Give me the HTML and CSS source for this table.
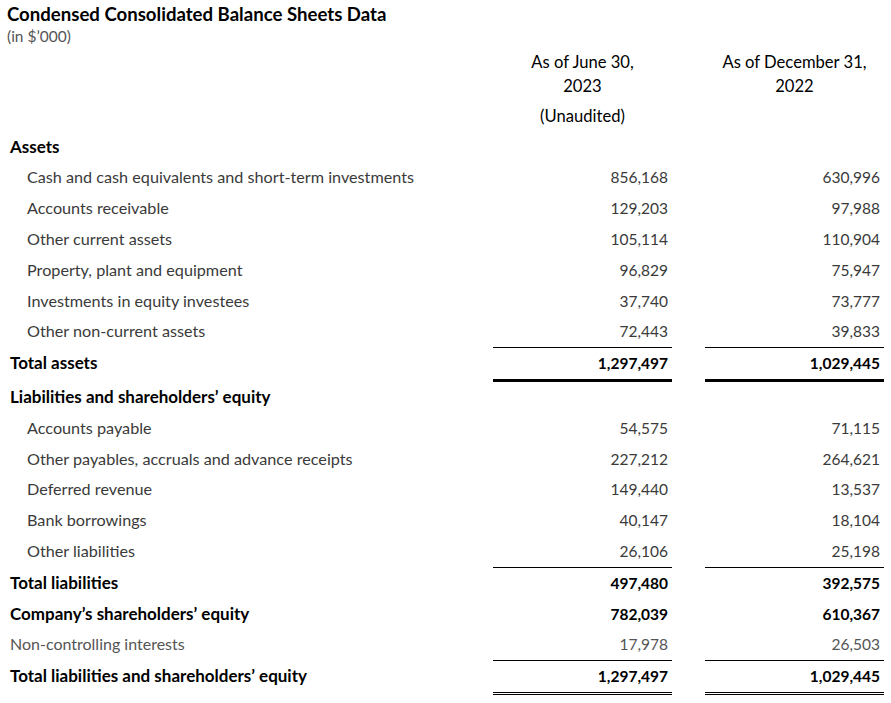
FILE: index.html
```html
<!DOCTYPE html>
<html lang="en">
<head>
<meta charset="utf-8">
<title>Condensed Consolidated Balance Sheets Data</title>
<link rel="stylesheet" href="styles.css">
</head>
<body>
<div class="page">
  <h1 class="title">Condensed Consolidated Balance Sheets Data</h1>
  <div class="unit">(in $’000)</div>

  <div class="sheet">
    <div class="row head">
      <div class="label"></div>
      <div class="colhead"><div>As of June 30,</div><div>2023</div><div class="note">(Unaudited)</div></div>
      <div class="colhead"><div>As of December 31,</div><div>2022</div></div>
    </div>

    <div class="row strong"><div class="label">Assets</div><div class="num"></div><div class="num"></div></div>
    <div class="row sub"><div class="label">Cash and cash equivalents and short-term investments</div><div class="num">856,168</div><div class="num">630,996</div></div>
    <div class="row sub"><div class="label">Accounts receivable</div><div class="num">129,203</div><div class="num">97,988</div></div>
    <div class="row sub"><div class="label">Other current assets</div><div class="num">105,114</div><div class="num">110,904</div></div>
    <div class="row sub"><div class="label">Property, plant and equipment</div><div class="num">96,829</div><div class="num">75,947</div></div>
    <div class="row sub"><div class="label">Investments in equity investees</div><div class="num">37,740</div><div class="num">73,777</div></div>
    <div class="row sub rule"><div class="label">Other non-current assets</div><div class="num">72,443</div><div class="num">39,833</div></div>
    <div class="row strong thick"><div class="label">Total assets</div><div class="num">1,297,497</div><div class="num">1,029,445</div></div>

    <div class="row strong"><div class="label">Liabilities and shareholders’ equity</div><div class="num"></div><div class="num"></div></div>
    <div class="row sub"><div class="label">Accounts payable</div><div class="num">54,575</div><div class="num">71,115</div></div>
    <div class="row sub"><div class="label">Other payables, accruals and advance receipts</div><div class="num">227,212</div><div class="num">264,621</div></div>
    <div class="row sub"><div class="label">Deferred revenue</div><div class="num">149,440</div><div class="num">13,537</div></div>
    <div class="row sub"><div class="label">Bank borrowings</div><div class="num">40,147</div><div class="num">18,104</div></div>
    <div class="row sub rule"><div class="label">Other liabilities</div><div class="num">26,106</div><div class="num">25,198</div></div>
    <div class="row strong"><div class="label">Total liabilities</div><div class="num">497,480</div><div class="num">392,575</div></div>
    <div class="row strong"><div class="label">Company’s shareholders’ equity</div><div class="num">782,039</div><div class="num">610,367</div></div>
    <div class="row plain rule"><div class="label">Non-controlling interests</div><div class="num">17,978</div><div class="num">26,503</div></div>
    <div class="row strong double"><div class="label">Total liabilities and shareholders’ equity</div><div class="num">1,297,497</div><div class="num">1,029,445</div></div>
  </div>
</div>
</body>
</html>
```

FILE: styles.css
```css
* { box-sizing: border-box; }

html, body {
  margin: 0;
  padding: 0;
  background: #ffffff;
}

body {
  font-family: "Lato", "Liberation Sans", sans-serif;
  color: #3a3a3a;
  font-size: 16px;
}

.page {
  padding: 2px 7px 0 7px;
}

.title {
  margin: 0;
  font-size: 18.6px;
  font-weight: 700;
  color: #000;
  line-height: 24px;
}

.unit {
  font-size: 15.5px;
  color: #555;
  line-height: 21px;
}

.sheet {
  display: flex;
  flex-direction: column;
}

.row {
  display: grid;
  grid-template-columns: 1fr 179px 179px;
  column-gap: 33px;
}

.head {
  padding-top: 3px;
  height: 84.6px;
}

.colhead {
  text-align: center;
  color: #000;
  font-size: 16.6px;
  line-height: 24px;
}

.colhead .note {
  margin-top: 6px;
}

.label,
.num {
  height: 30.8px;
  line-height: 30.8px;
  white-space: nowrap;
}

.label {
  padding-left: 3px;
}

.num {
  text-align: right;
  padding-right: 4px;
  color: #3a3a3a;
  font-size: 15.5px;
}

.sub .label {
  padding-left: 20px;
  color: #3a3a3a;
  font-size: 16.2px;
}

.plain .label {
  color: #555;
}

.plain .num {
  color: #555;
}

.strong .label {
  color: #000;
  font-weight: 700;
  font-size: 17px;
}

.strong .num {
  color: #000;
  font-weight: 700;
  font-size: 15.5px;
}

.rule .num {
  border-bottom: 1px solid #000;
  height: 31.8px;
}

.rule .label {
  height: 31.8px;
}

.thick .num {
  border-bottom: 3px solid #000;
  height: 33.8px;
}

.thick .label {
  height: 33.8px;
}

.double .num {
  border-bottom: 3px double #000;
  height: 33.8px;
}
```
